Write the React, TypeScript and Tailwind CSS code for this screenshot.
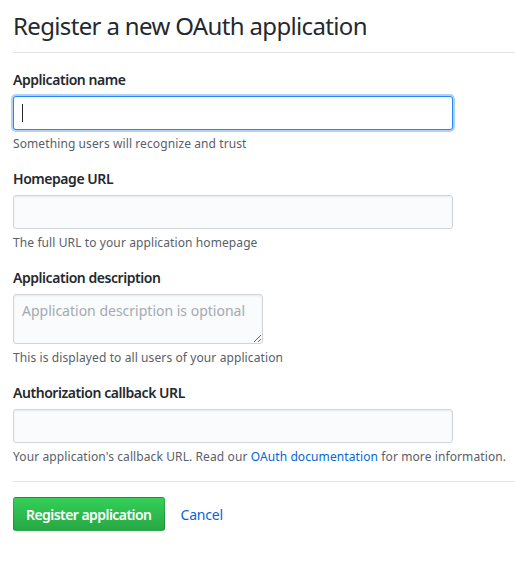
export default function App() {
  return (
    <div
      className="min-h-[567px] bg-white pl-[13px] text-[#24292e]"
      style={{ fontFamily: '"Noto Sans", "Open Sans", sans-serif' }}
    >
      <div className="border-b border-[#e1e4e8] pt-[9px] pb-[9px]">
        <h1 className="text-[24px] leading-[34px] font-normal tracking-[-0.65px]">
          Register a new OAuth application
        </h1>
      </div>

      <form className="pt-[17px]" onSubmit={(e) => e.preventDefault()}>
        <div>
          <label className="block text-[14px] leading-[20px] font-semibold tracking-[-0.45px]">
            Application name
          </label>
          <div className="relative mt-[6px] w-[440px]">
            <input
              type="text"
              autoFocus
              className="block h-[34px] w-[440px] rounded-[3px] border border-[#2188ff] bg-white px-2 text-[14px] caret-transparent shadow-[0_0_0_2px_rgba(3,102,214,0.3)] outline-none"
            />
            {/* caret */}
            <span className="pointer-events-none absolute top-[8px] left-[9px] h-[18px] w-px bg-[#24292e]" />
          </div>
          <p className="mt-[5px] text-[12px] leading-[18px] tracking-[0.1px] text-[#586069]">
            Something users will recognize and trust
          </p>
        </div>

        <div className="mt-[16px]">
          <label className="block text-[14px] leading-[20px] font-semibold tracking-[-0.45px]">
            Homepage URL
          </label>
          <input
            type="text"
            className="mt-[6px] block h-[34px] w-[440px] rounded-[3px] border border-[#d1d5da] bg-[#fafbfc] px-2 text-[14px] shadow-[inset_0_1px_2px_rgba(27,31,35,0.075)] outline-none"
          />
          <p className="mt-[5px] text-[12px] leading-[18px] tracking-[0.1px] text-[#586069]">
            The full URL to your application homepage
          </p>
        </div>

        <div className="mt-[16px]">
          <label className="block text-[14px] leading-[20px] font-semibold tracking-[-0.45px]">
            Application description
          </label>
          <textarea
            placeholder="Application description is optional"
            className="mt-[6px] block h-[50px] w-[250px] rounded-[3px] border border-[#d1d5da] bg-[#fafbfc] px-2 py-[6px] text-[14px] leading-[20px] shadow-[inset_0_1px_2px_rgba(27,31,35,0.075)] outline-none placeholder:text-[#a3aab1]"
          />
          <p className="mt-[5px] text-[12px] leading-[18px] tracking-[0.1px] text-[#586069]">
            This is displayed to all users of your application
          </p>
        </div>

        <div className="mt-[16px]">
          <label className="block text-[14px] leading-[20px] font-semibold tracking-[-0.45px]">
            Authorization callback URL
          </label>
          <input
            type="text"
            className="mt-[6px] block h-[34px] w-[440px] rounded-[3px] border border-[#d1d5da] bg-[#fafbfc] px-2 text-[14px] shadow-[inset_0_1px_2px_rgba(27,31,35,0.075)] outline-none"
          />
          <p className="mt-[5px] text-[12px] leading-[18px] tracking-[0.1px] text-[#586069]">
            Your application's callback URL. Read our{" "}
            <a href="#" className="text-[#0366d6]">
              OAuth documentation
            </a>{" "}
            for more information.
          </p>
        </div>

        <div className="mt-[15px] flex items-center gap-4 border-t border-[#e1e4e8] pt-[15px]">
          <button
            type="submit"
            className="h-[34px] rounded-[3px] border border-[rgba(27,31,35,0.2)] bg-gradient-to-b from-[#34d058] to-[#28a745] px-3 text-[14px] font-semibold tracking-[-0.55px] text-white"
          >
            Register application
          </button>
          <a href="#" className="text-[14px] tracking-[-0.2px] text-[#0366d6]">
            Cancel
          </a>
        </div>
      </form>
    </div>
  );
}
